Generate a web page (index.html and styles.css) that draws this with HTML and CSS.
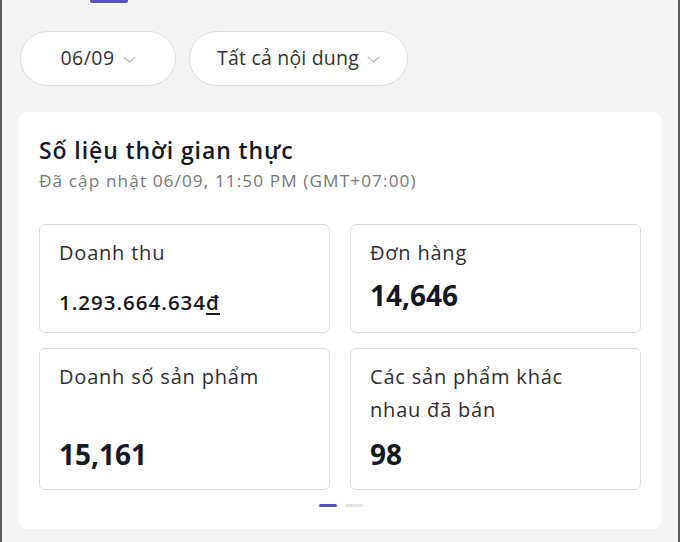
FILE: index.html
```html
<!DOCTYPE html>
<html lang="vi">
<head>
<meta charset="utf-8">
<link rel="stylesheet" href="styles.css">
</head>
<body>
<div class="frame">
  <div class="tabbar"><span class="tab-indicator"></span></div>
  <div class="filters">
    <button class="pill pill-date">06/09 <svg class="chev" viewBox="0 0 13 7" width="13" height="7"><path d="M0.7 0.8 L6.5 6 L12.3 0.8" fill="none" stroke="#b0b0b0" stroke-width="1.1"/></svg></button>
    <button class="pill pill-content">Tất cả nội dung <svg class="chev" viewBox="0 0 13 7" width="13" height="7"><path d="M0.7 0.8 L6.5 6 L12.3 0.8" fill="none" stroke="#b0b0b0" stroke-width="1.1"/></svg></button>
  </div>
  <section class="card">
    <h2 class="title">Số liệu thời gian thực</h2>
    <p class="subtitle">Đã cập nhật 06/09, 11:50 PM (GMT+07:00)</p>
    <div class="grid">
      <div class="metric small">
        <div class="label">Doanh thu</div>
        <div class="value value-sm">1.293.664.634<u>đ</u></div>
      </div>
      <div class="metric small">
        <div class="label">Đơn hàng</div>
        <div class="value">14,646</div>
      </div>
      <div class="metric tall">
        <div class="label">Doanh số sản phẩm</div>
        <div class="value">15,161</div>
      </div>
      <div class="metric tall">
        <div class="label">Các sản phẩm khác nhau đã bán</div>
        <div class="value">98</div>
      </div>
    </div>
    <div class="dots"><span class="dot active"></span><span class="dot"></span></div>
  </section>
</div>
</body>
</html>
```

FILE: styles.css
```css
* { box-sizing: border-box; }
html, body { margin: 0; padding: 0; }
body {
  width: 680px;
  height: 542px;
  overflow: hidden;
  background: #f4f4f4;
  font-family: "Open Sans", "Noto Sans", sans-serif;
  color: #161823;
}
.frame {
  height: 542px;
  border-left: 2px solid #5c5c5c;
  border-right: 2px solid #5c5c5c;
  padding: 0 17px;
}
.tabbar {
  height: 31px;
  padding-left: 71px;
}
.tab-indicator {
  display: block;
  width: 38px;
  height: 3px;
  background: #5a4fc8;
  border-radius: 0 0 2px 2px;
}
.filters {
  display: flex;
  gap: 13px;
  padding-left: 1px;
}
.pill {
  height: 55px;
  border: 1px solid #dddddd;
  background: #fff;
  border-radius: 28px;
  display: flex;
  align-items: center;
  justify-content: center;
  gap: 8px;
  font-family: inherit;
  font-size: 19.5px;
  letter-spacing: 0.5px;
  color: #333;
  padding: 0 0 2px;
}
.pill-date { width: 156px; }
.pill-content { width: 219px; letter-spacing: 0.2px; }
.chev { margin-top: 3px; }
.card {
  margin-top: 26px;
  background: #fff;
  border-radius: 8px;
  height: 417px;
  padding: 22px 20px 0 20px;
}
.title {
  margin: 0;
  font-size: 23px;
  font-weight: 600;
  letter-spacing: 0.9px;
  line-height: 32px;
  color: #161823;
}
.subtitle {
  margin: 4px 0 0;
  font-size: 17.2px;
  letter-spacing: 1.1px;
  line-height: 22px;
  color: #77787c;
}
.grid {
  margin-top: 32px;
  display: grid;
  grid-template-columns: 291px 291px;
  grid-template-rows: 109px 142px;
  column-gap: 20px;
  row-gap: 15px;
}
.metric {
  border: 1px solid #dcdcdc;
  border-radius: 6px;
  padding: 11px 30px 0 19px;
  display: flex;
  flex-direction: column;
}
.label {
  font-size: 20px;
  letter-spacing: 0.8px;
  line-height: 33px;
  color: #2e2e33;
}
.value {
  font-size: 28px;
  font-weight: 700;
  color: #161823;
  line-height: 32px;
  margin-top: 10px;
}
.value-sm {
  font-size: 20.5px;
  font-weight: 600;
  letter-spacing: 1px;
  margin-top: 17px;
}
.value-sm u { text-decoration-thickness: 1.5px; text-underline-offset: 3px; }
.tall .value { margin-top: auto; margin-bottom: 19px; }
.dots {
  display: flex;
  justify-content: center;
  gap: 8px;
  margin-top: 14px;
  padding-left: 1px;
}
.dot {
  width: 18px;
  height: 3px;
  border-radius: 2px;
  background: #e2e2e2;
}
.dot.active { background: #5a4fc8; }
```
